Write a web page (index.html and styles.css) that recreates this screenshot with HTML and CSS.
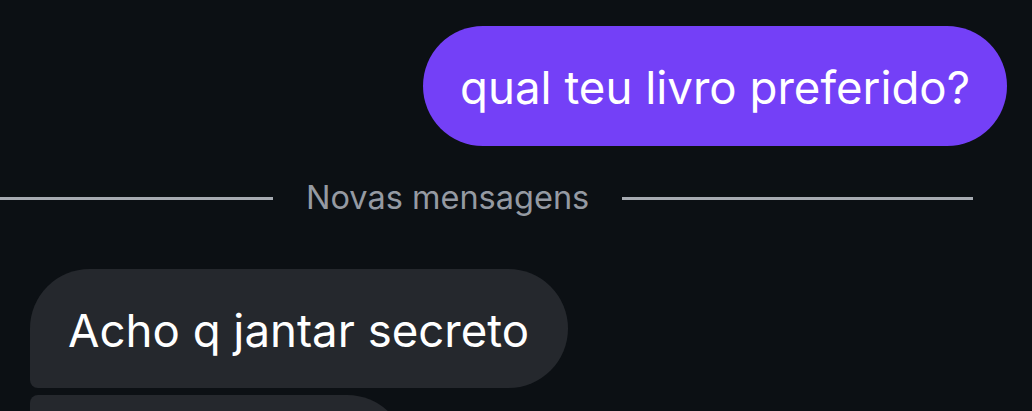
FILE: index.html
```html
<!DOCTYPE html>
<html lang="pt">
<head>
<meta charset="utf-8">
<link rel="stylesheet" href="styles.css">
</head>
<body>
<div class="chat">
  <div class="row out">
    <div class="bubble sent">qual teu livro preferido?</div>
  </div>
  <div class="divider">
    <span class="line left"></span>
    <span class="label">Novas mensagens</span>
    <span class="line right"></span>
  </div>
  <div class="row in">
    <div class="bubble recv first">Acho q jantar secreto</div>
    <div class="bubble recv next">&nbsp;</div>
  </div>
</div>
</body>
</html>
```
FILE: styles.css
```css
html, body {
  margin: 0;
  padding: 0;
  background: #0c1014;
  height: 100%;
  overflow: hidden;
}
.chat {
  font-family: Inter, Roboto, "Liberation Sans", sans-serif;
  display: flex;
  flex-direction: column;
  padding-top: 26px;
}
.row {
  display: flex;
}
.row.out {
  justify-content: flex-end;
  padding-right: 25px;
}
.row.in {
  flex-direction: column;
  align-items: flex-start;
  padding-left: 30px;
  gap: 7px;
}
.bubble {
  box-sizing: border-box;
  height: 120px;
  display: flex;
  align-items: center;
  padding: 0 37px;
  font-size: 45.6px;
  line-height: 1;
  color: #ffffff;
  white-space: nowrap;
}
.sent {
  background: #7440f7;
  border-radius: 60px;
  padding-top: 4px;
}
.recv {
  background: #25282d;
  padding-top: 4px;
}
.recv.first {
  border-radius: 60px 60px 60px 8px;
  height: 119px;
  padding-left: 38px;
  padding-right: 39px;
}
.recv.next {
  width: 377px;
  border-radius: 8px 60px 60px 8px;
}
.divider {
  display: grid;
  grid-template-columns: 273px auto 351px;
  column-gap: 33px;
  align-items: center;
  margin-top: 30px;
  margin-bottom: 49px;
  width: max-content;
}
.line {
  display: block;
  height: 3px;
  background: #a7abb2;
}
.label {
  font-size: 32.5px;
  line-height: 44px;
  color: #959aa2;
}
```
